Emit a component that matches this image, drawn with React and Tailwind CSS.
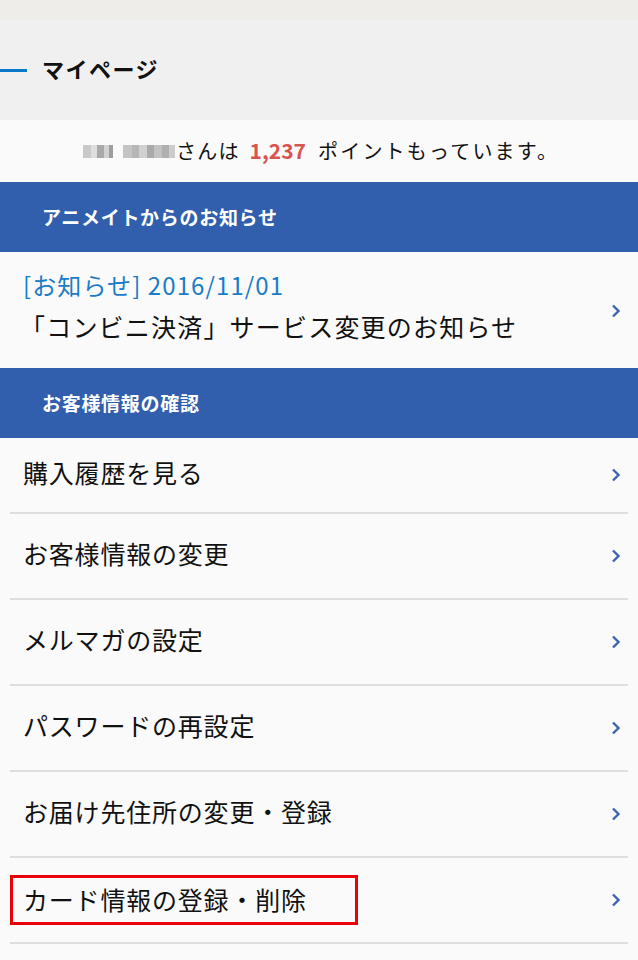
const font = { fontFamily: '"Noto Sans CJK JP", "Noto Sans", sans-serif' };

const Chevron = () => (
  <svg width="10" height="14" viewBox="0 0 10 14" className="shrink-0">
    <path d="M2 1.5 L7.5 7 L2 12.5" fill="none" stroke="#3a64b0" strokeWidth="2.4" />
  </svg>
);

const SectionHeader = ({ children }) => (
  <div className="h-[70px] bg-[#325fad] flex items-center pl-[42px] text-white font-bold text-[19px] tracking-[0.7px]">
    {children}
  </div>
);

const items = [
  "購入履歴を見る",
  "お客様情報の変更",
  "メルマガの設定",
  "パスワードの再設定",
  "お届け先住所の変更・登録",
  "カード情報の登録・削除",
];

// pixelated (mosaic) user name
const BlurName = () => (
  <span className="inline-flex items-center mr-[1px]">
    <span className="w-[8px] h-[13px] bg-[#c9c9c9]" />
    <span className="w-[6px] h-[13px] bg-[#dedede]" />
    <span className="w-[7px] h-[13px] bg-[#a9a9a9]" />
    <span className="w-[5px] h-[13px] bg-[#d2d2d2]" />
    <span className="w-[4px] h-[13px] bg-[#9d9d9d]" />
    <span className="w-[10px] h-[13px] bg-[#fafafa]" />
    <span className="w-[9px] h-[13px] bg-[#c4c4c4]" />
    <span className="w-[7px] h-[13px] bg-[#b6b6b6]" />
    <span className="w-[8px] h-[13px] bg-[#d0d0d0]" />
    <span className="w-[7px] h-[13px] bg-[#aaaaaa]" />
    <span className="w-[8px] h-[13px] bg-[#c2c2c2]" />
    <span className="w-[7px] h-[13px] bg-[#b0b0b0]" />
    <span className="w-[6px] h-[13px] bg-[#cccccc]" />
  </span>
);

export default function App() {
  return (
    <div className="w-[638px] h-[960px] overflow-hidden bg-[#fafafa] text-[#111]" style={font}>
      <div className="h-[20px] bg-[#eeede9]" />
      <div className="h-[100px] bg-[#f0f0f0] flex items-center">
        <div className="w-[27px] h-[3px] bg-[#0a78c8]" />
        <h1 className="ml-[15px] -mt-[3px] text-[22px] font-bold tracking-[1.5px]">マイページ</h1>
      </div>
      <div className="h-[62px] flex items-center pl-[83px] text-[20px]">
        <BlurName />
        <span className="tracking-[1.2px]">さんは</span>
        <span className="ml-[10px] mr-[12px] text-[#d9534f] font-bold text-[21px]">1,237</span>
        <span className="tracking-[2.2px]">ポイントもっています。</span>
      </div>
      <SectionHeader>アニメイトからのお知らせ</SectionHeader>
      <div className="h-[116px] flex items-start justify-between pl-[23px] pr-[17px] pt-[17px]">
        <div className="flex flex-col">
          <span className="text-[24px] text-[#1a7cc9] leading-[32px] tracking-[1.1px]">[お知らせ] 2016/11/01</span>
          <span className="text-[25px] leading-[40px] mt-[5px] -ml-[3px] tracking-[1.2px]">「コンビニ決済」サービス変更のお知らせ</span>
        </div>
        <div className="mt-[35px]">
          <Chevron />
        </div>
      </div>
      <SectionHeader>お客様情報の確認</SectionHeader>
      <ul>
        {items.map((t, i) => (
          <li key={t} className={`px-[10px] ${i === 0 ? "h-[76px]" : "h-[86px]"}`}>
            <div className="h-full flex items-center justify-between border-b-2 border-[#dedede] pr-[7px]">
              {i === 5 ? (
                <span className="w-[348px] h-[50px] flex items-center border-[3px] border-[#e8000b] pl-[10px] text-[25px] tracking-[0.8px]">
                  {t}
                </span>
              ) : (
                <span className="pl-[13px] text-[25px] tracking-[0.8px] -mt-[4px]">{t}</span>
              )}
              <Chevron />
            </div>
          </li>
        ))}
      </ul>
    </div>
  );
}
